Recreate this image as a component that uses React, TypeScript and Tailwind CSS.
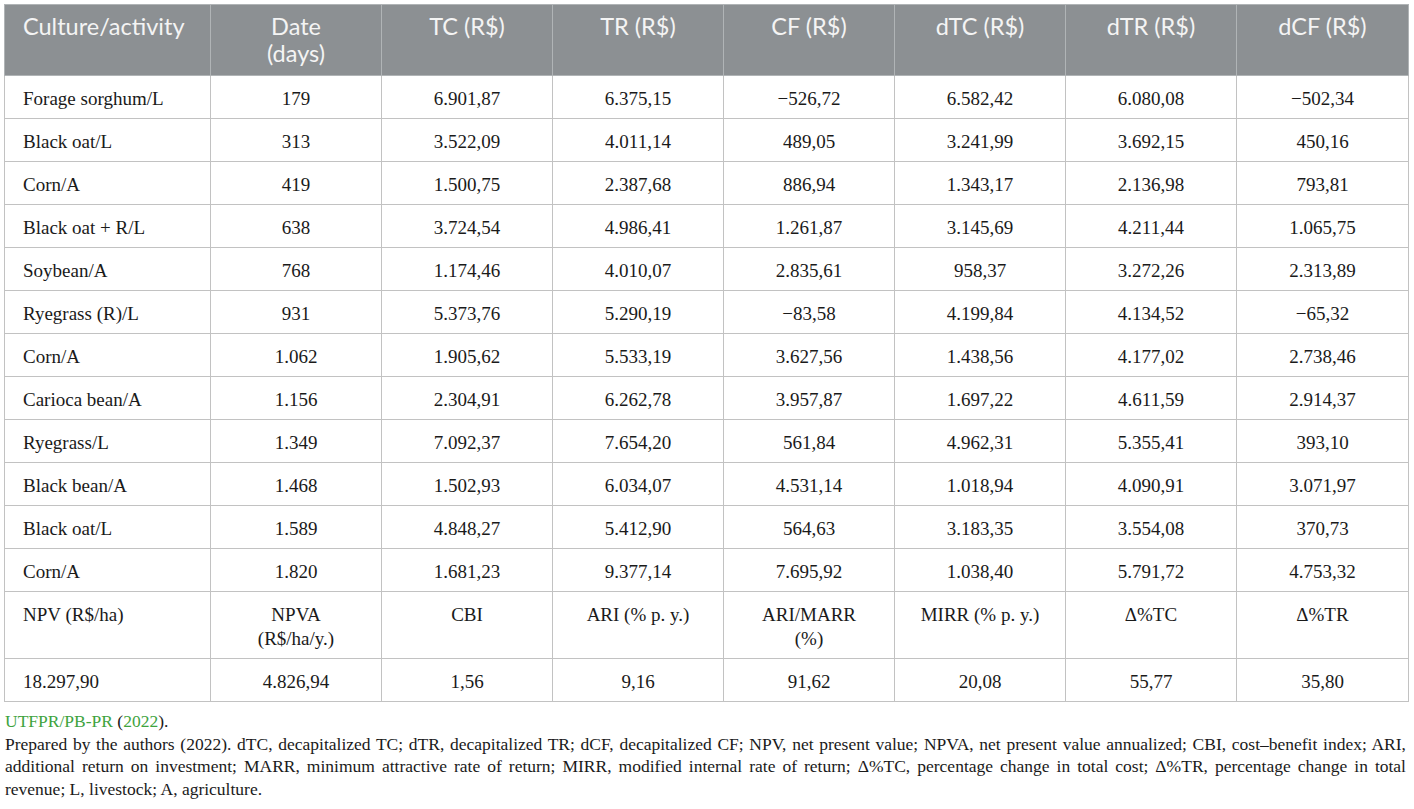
import React from "react";

const headers = [
  "Culture/activity",
  "Date (days)",
  "TC (R$)",
  "TR (R$)",
  "CF (R$)",
  "dTC (R$)",
  "dTR (R$)",
  "dCF (R$)",
];

const rows: string[][] = [
  ["Forage sorghum/L", "179", "6.901,87", "6.375,15", "−526,72", "6.582,42", "6.080,08", "−502,34"],
  ["Black oat/L", "313", "3.522,09", "4.011,14", "489,05", "3.241,99", "3.692,15", "450,16"],
  ["Corn/A", "419", "1.500,75", "2.387,68", "886,94", "1.343,17", "2.136,98", "793,81"],
  ["Black oat + R/L", "638", "3.724,54", "4.986,41", "1.261,87", "3.145,69", "4.211,44", "1.065,75"],
  ["Soybean/A", "768", "1.174,46", "4.010,07", "2.835,61", "958,37", "3.272,26", "2.313,89"],
  ["Ryegrass (R)/L", "931", "5.373,76", "5.290,19", "−83,58", "4.199,84", "4.134,52", "−65,32"],
  ["Corn/A", "1.062", "1.905,62", "5.533,19", "3.627,56", "1.438,56", "4.177,02", "2.738,46"],
  ["Carioca bean/A", "1.156", "2.304,91", "6.262,78", "3.957,87", "1.697,22", "4.611,59", "2.914,37"],
  ["Ryegrass/L", "1.349", "7.092,37", "7.654,20", "561,84", "4.962,31", "5.355,41", "393,10"],
  ["Black bean/A", "1.468", "1.502,93", "6.034,07", "4.531,14", "1.018,94", "4.090,91", "3.071,97"],
  ["Black oat/L", "1.589", "4.848,27", "5.412,90", "564,63", "3.183,35", "3.554,08", "370,73"],
  ["Corn/A", "1.820", "1.681,23", "9.377,14", "7.695,92", "1.038,40", "5.791,72", "4.753,32"],
  ["NPV (R$/ha)", "NPVA (R$/ha/y.)", "CBI", "ARI (% p. y.)", "ARI/MARR (%)", "MIRR (% p. y.)", "Δ%TC", "Δ%TR"],
  ["18.297,90", "4.826,94", "1,56", "9,16", "91,62", "20,08", "55,77", "35,80"],
];

export default function App() {
  return (
    <div className="w-[1414px] h-[809px] bg-white pl-[4px] pt-[4px] pr-[6px] overflow-hidden [font-family:Liberation_Serif,serif]">
      <table className="table-fixed border-collapse w-[1404px] border border-[#b7c0bc]">
        <colgroup>
          <col className="w-[206px]" />
          <col className="w-[171px]" />
          <col className="w-[171px]" />
          <col className="w-[171px]" />
          <col className="w-[171px]" />
          <col className="w-[171px]" />
          <col className="w-[171px]" />
          <col className="w-[172px]" />
        </colgroup>
        <thead>
          <tr className="bg-[#8c9093] text-[#f4f4f4] [font-family:Lato,sans-serif]">
            {headers.map((h, i) => (
              <th
                key={i}
                className={`align-top font-normal border border-[#b0b4b6] pt-[8px] pb-[8px] text-[23.5px] leading-[27px] ${
                  i === 0 ? "text-left pl-[18px] pr-[4px]" : i === 1 ? "text-center px-[42px]" : "text-center px-[6px]"
                }`}
              >
                {h}
              </th>
            ))}
          </tr>
        </thead>
        <tbody className="text-[19px] leading-[24px] text-[#1a1a1a]">
          {rows.map((r, ri) => (
            <tr key={ri}>
              {r.map((c, ci) => (
                <td
                  key={ci}
                  className={`align-top border border-[#c2c2c2] pt-[11px] pb-[7px] ${
                    ci === 0 ? "text-left pl-[18px] pr-[8px]" : "text-center px-[24px]"
                  }`}
                >
                  {c}
                </td>
              ))}
            </tr>
          ))}
        </tbody>
      </table>
      <div className="text-[17.5px] leading-[22.5px] text-[#1a1a1a] mt-[8px] pl-[1px] pr-[2px]">
        <p>
          <span className="text-[#3ea33e]">UTFPR/PB-PR</span> (<span className="text-[#3ea33e]">2022</span>).
        </p>
        <p className="text-justify [text-align-last:justify] whitespace-nowrap">
          Prepared by the authors (2022). dTC, decapitalized TC; dTR, decapitalized TR; dCF, decapitalized CF; NPV, net present value; NPVA, net present value annualized; CBI, cost–benefit index; ARI,
        </p>
        <p className="text-justify [text-align-last:justify] whitespace-nowrap">
          additional return on investment; MARR, minimum attractive rate of return; MIRR, modified internal rate of return; Δ%TC, percentage change in total cost; Δ%TR, percentage change in total
        </p>
        <p>revenue; L, livestock; A, agriculture.</p>
      </div>
    </div>
  );
}
